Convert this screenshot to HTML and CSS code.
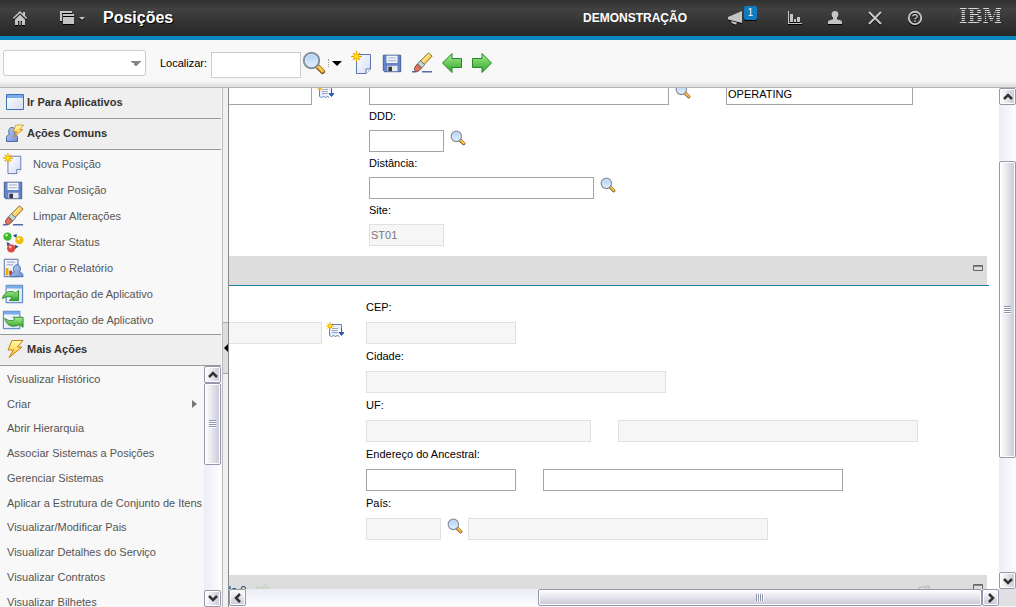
FILE: index.html
```html
<!DOCTYPE html>
<html lang="pt-BR">
<head>
    <meta charset="UTF-8">
    <meta name="viewport" content="width=device-width, initial-scale=1.0">
    <title>Posições</title>
    <link rel="stylesheet" href="styles.css">
</head>
<body>
    <!-- Icon set -->
    <svg class="icon-defs" aria-hidden="true">
        <defs>
            <linearGradient id="gGreen" x1="0" y1="0" x2="0" y2="1"><stop offset="0" stop-color="#a8ee8c"/><stop offset="1" stop-color="#2fa329"/></linearGradient>
            <linearGradient id="gPage" x1="0" y1="0" x2="1" y2="1"><stop offset="0" stop-color="#ffffff"/><stop offset="1" stop-color="#d3dcf3"/></linearGradient>
            <linearGradient id="gBolt" x1="0" y1="0" x2="0" y2="1"><stop offset="0" stop-color="#fffbb0"/><stop offset="1" stop-color="#ffc21c"/></linearGradient>
            <linearGradient id="gBlue" x1="0" y1="0" x2="1" y2="1"><stop offset="0" stop-color="#bccdf0"/><stop offset="1" stop-color="#6f8fd0"/></linearGradient>
            <linearGradient id="gLens" x1="0" y1="0" x2="0" y2="1"><stop offset="0" stop-color="#a9cdf3"/><stop offset="1" stop-color="#e6f3ff"/></linearGradient>
        </defs>
        <symbol id="home" viewBox="0 0 16 16"><path d="M8 1 0.8 8l1.1 1.1L8 3.2l6.1 5.9L15.2 8 13 5.8V2h-2v1.9z"/><path d="M8 4.6 3 9.4V15h3v-4h1.3v4h1.4v-4H10v4h3V9.4z"/></symbol>
        <symbol id="windows" viewBox="0 0 16 16"><path d="M1 1h12v2H3v8H1z"/><path d="M4 4h11v2H4zM4 7h11v7H4z"/></symbol>
        <symbol id="megaphone" viewBox="0 0 16 16"><path d="M15 1v12L1 9.5V7z"/><path d="M4 11l6 1.6-1 2.2-4-1.6z"/></symbol>
        <symbol id="chart" viewBox="0 0 16 16"><path d="M1 1h1v12h13v1H1zM3 4h3v8H3zM7 9h2v3H7zM10 7h3v5h-3z"/></symbol>
        <symbol id="user" viewBox="0 0 16 16"><path d="M8 1c2.4 0 3.4 1.500 3.400 3.400 0 1.600-.8 2.600-1.400 3.500v1.300l4 1.400c.9.3 1 1.200 1 3.400H1c0-2.200.1-3.100 1-3.400l4-1.400V7.900C5.400 7 4.600 6 4.600 4.400 4.600 2.500 5.600 1 8 1z"/></symbol>
        <symbol id="close" viewBox="0 0 16 16"><path d="M2 2l12 12M14 2 2 14" fill="none" stroke="currentColor" stroke-width="2.200"/></symbol>
        <symbol id="help" viewBox="0 0 16 16"><circle cx="8" cy="8" r="6.200" fill="none" stroke="currentColor" stroke-width="1.900"/><path d="M5.800 6.600C5.800 3.800 10.300 4 10.200 6.500 10.200 8 8 8 8 9.600" fill="none" stroke="currentColor" stroke-width="1.500"/><path d="M7.200 10.500h1.600V12H7.200z"/></symbol>
        <symbol id="search" viewBox="0 0 24 24"><path d="M15 15l5.500 5.500" stroke="#8b5a2b" stroke-width="5" stroke-linecap="round"/><path d="M16 15.500l4.500 4.500" stroke="#ffc83a" stroke-width="3" stroke-linecap="round"/><circle cx="9.500" cy="9.500" r="7.700" fill="url(#gLens)" stroke="#87909e" stroke-width="2"/><circle cx="9.500" cy="9.500" r="6" fill="none" stroke="#dfe8f4"/></symbol>
        <symbol id="star" viewBox="0 0 12 12"><path d="M6 0v12M0 6h12M2.200 2.200l7.600 7.600M9.800 2.200 2.200 9.800" stroke="#eba300" stroke-width="1.400"/><circle cx="6" cy="6" r="2.500" fill="#fff200" stroke="#f5b700"/></symbol>
        <symbol id="new" viewBox="0 0 24 24"><path d="M6.500 3.500h14V18L16 22.500H6.500z" fill="url(#gPage)" stroke="#5e76ad"/><path d="M20.500 18H16v4.500" fill="#fff" stroke="#5e76ad"/><use href="#star" x="1" y="0" width="11" height="11"/></symbol>
        <symbol id="save" viewBox="0 0 24 24"><path d="M2.500 3.500h19v18H4l-1.500-1.500z" fill="#6384c8" stroke="#3d588f"/><path d="M6 4h12v8H6z" fill="#f5f6fa"/><path d="M7.500 6.500h9M7.500 9.500h9" stroke="#9ca9bf"/><path d="M7 15h11v6H7z" fill="#e9e9e9"/><path d="M8 16h4v5H8z" fill="#353b49"/></symbol>
        <symbol id="eraser" viewBox="0 0 24 24"><path d="M1 21.500h5M12 21.500h11" stroke="#516ca9" stroke-width="1.500"/><path d="M10 10 19 1l4 3.500L14 14z" fill="#ffd45e" stroke="#776129"/><path d="M20 2.500 11 12" stroke="#fff5b5"/><path d="M7 13l3.500-3.500L15 14l-3.500 3.500z" fill="#c5d7d5" stroke="#526a6b"/><path d="M4 17l3-4 4.500 4.500L8 21c-3 1-5-1-4-4z" fill="#dd7460" stroke="#7b3931"/></symbol>
        <symbol id="arrow-left" viewBox="0 0 24 24"><path d="M2.500 12 12 2.500v5h9.500v9H12v5z" fill="url(#gGreen)" stroke="#24862a"/></symbol>
        <symbol id="arrow-right" viewBox="0 0 24 24"><path d="M21.500 12 12 2.500v5H2.500v9H12v5z" fill="url(#gGreen)" stroke="#24862a"/></symbol>
        <symbol id="app" viewBox="0 0 20 20"><path d="M1.500 2.500h17v15h-17z" fill="url(#gPage)" stroke="#3b71b7"/><path d="M2 3h16v3H2z" fill="#78abe9"/></symbol>
        <symbol id="bolt" viewBox="0 0 20 20"><path d="M7 1.500h11L12.500 8H17L4 18.500 8.500 11H3z" fill="url(#gBolt)" stroke="#c57c16"/></symbol>
        <symbol id="person-bolt" viewBox="0 0 20 20"><path d="M1.500 18.500v-4c0-2 1.500-2.500 3-3-2-4 0-7 2.500-7s4.500 3 2.500 7c1.500.5 3 1 3 3v4z" fill="url(#gBlue)" stroke="#4d69a8"/><use href="#bolt" x="6" y="1" width="14" height="14"/></symbol>
        <symbol id="status" viewBox="0 0 24 24"><path d="M12 5l4-2v5zM5 12l1 5 3-3zM18 17l-4 3v-5z" fill="#284f85"/><circle cx="6" cy="6" r="4.500" fill="#39b82f"/><circle cx="5" cy="4.500" r="1.500" fill="#bbf19e"/><circle cx="19" cy="10" r="4.500" fill="#efbc16"/><circle cx="18" cy="8.500" r="1.500" fill="#fff5aa"/><circle cx="10" cy="19" r="4.500" fill="#d94b43"/><circle cx="9" cy="17.500" r="1.500" fill="#ffc0b5"/></symbol>
        <symbol id="report" viewBox="0 0 24 24"><path d="M2.500 2.500h15v19h-15z" fill="url(#gPage)" stroke="#4a679e"/><path d="M5 5.500h9M5 8.500h7" stroke="#8f9db4"/><path d="M4 12h3v8H4z" fill="#e8ad00"/><path d="M8 15h3v5H8z" fill="#d02a22"/><path d="M9.500 21.500c0-4 2-4.500 4-5-2.500-4 0-8 3-8s5 4 2.500 8c2 .5 4 1 4 5z" fill="url(#gBlue)" stroke="#3a6cae"/></symbol>
        <symbol id="import" viewBox="0 0 24 24"><path d="M4.500 2.500h18v19h-18z" fill="url(#gPage)" stroke="#3b71b7"/><path d="M5 3h17v3H5z" fill="#78abe9"/><path d="M.5 17C2 10 9 7 15 11l3-3v11H8l3-3c-3-2-7-1-10.500 1z" fill="url(#gGreen)" stroke="#2b8a2d"/></symbol>
        <symbol id="export" viewBox="0 0 24 24"><path d="M1.500 2.500h18v19h-18z" fill="url(#gPage)" stroke="#3b71b7"/><path d="M2 3h17v3H2z" fill="#78abe9"/><path d="M3 10c3 3 8 4 11 1l-2-2h11v11l-4-3C12 21 4 18 3 10z" fill="url(#gGreen)" stroke="#2b8a2d"/></symbol>
        <symbol id="doc-menu" viewBox="0 0 18 16"><path d="M3.500 2.500h12V9M3.500 2.500v11l2 1 2-1 2 1 2-1 2 1" fill="#e9eefb" stroke="#6c83b6"/><path d="M6 6.500h6M6 8.500h6M6 10.500h6" stroke="#91a3cf"/><path d="M15.500 6v7M13 10.500h5l-2.500 3z" fill="#2b5bb5" stroke="#2b5bb5"/><use href="#star" width="8" height="8"/></symbol>
        <symbol id="minimize" viewBox="0 0 10 6"><path d="M.5.5h9v5h-9z" fill="#ddd" stroke="#666"/><path d="M1 1h8v1H1z" fill="#888"/></symbol>
        <symbol id="chev" viewBox="0 0 10 10"><path d="M1 7l4-4 4 4" fill="none" stroke="#333" stroke-width="2.500"/></symbol>
    </svg>

    <header class="navbar">
        <button class="nav-btn" aria-label="Início"><svg class="i16"><use href="#home"/></svg></button>
        <button class="nav-btn nav-windows" aria-label="Aplicativos abertos"><svg class="i16"><use href="#windows"/></svg><span class="caret"></span></button>
        <h1>Posições</h1>
        <span class="user-name">DEMONSTRAÇÃO</span>
        <button class="nav-btn nav-news" aria-label="Boletins"><svg class="i16"><use href="#megaphone"/></svg><span class="badge">1</span></button>
        <button class="nav-btn" aria-label="Relatórios"><svg class="i16"><use href="#chart"/></svg></button>
        <button class="nav-btn" aria-label="Perfil"><svg class="i16"><use href="#user"/></svg></button>
        <button class="nav-btn" aria-label="Sair"><svg class="i16"><use href="#close"/></svg></button>
        <button class="nav-btn" aria-label="Ajuda"><svg class="i16"><use href="#help"/></svg></button>
        <span class="logo">IBM<small>.</small></span>
    </header>

    <div class="toolbar">
        <select class="query" aria-label="Consulta"><option></option></select>
        <label for="find">Localizar:</label>
        <input type="text" id="find" class="find">
        <button class="tool tool-search" aria-label="Pesquisar"><svg class="i24"><use href="#search"/></svg></button>
        <button class="tool find-menu" aria-label="Opções de pesquisa"><span class="dots"></span><span class="caret"></span></button>
        <div class="tools">
            <button class="tool" aria-label="Nova"><svg class="i24"><use href="#new"/></svg></button>
            <button class="tool" aria-label="Salvar"><svg class="i22"><use href="#save"/></svg></button>
            <button class="tool" aria-label="Limpar"><svg class="i22"><use href="#eraser"/></svg></button>
            <button class="tool" aria-label="Anterior"><svg class="i24"><use href="#arrow-left"/></svg></button>
            <button class="tool" aria-label="Próximo"><svg class="i24"><use href="#arrow-right"/></svg></button>
        </div>
    </div>

    <div class="workspace">
        <nav class="sidebar">
            <h2><svg class="i20"><use href="#app"/></svg>Ir Para Aplicativos</h2>
            <h2><svg class="i20"><use href="#person-bolt"/></svg>Ações Comuns</h2>
            <ul class="common">
                <li><a href="#"><svg class="i22"><use href="#new"/></svg>Nova Posição</a></li>
                <li><a href="#"><svg class="i22"><use href="#save"/></svg>Salvar Posição</a></li>
                <li><a href="#"><svg class="i22"><use href="#eraser"/></svg>Limpar Alterações</a></li>
                <li><a href="#"><svg class="i22"><use href="#status"/></svg>Alterar Status</a></li>
                <li><a href="#"><svg class="i22"><use href="#report"/></svg>Criar o Relatório</a></li>
                <li><a href="#"><svg class="i22"><use href="#import"/></svg>Importação de Aplicativo</a></li>
                <li><a href="#"><svg class="i22"><use href="#export"/></svg>Exportação de Aplicativo</a></li>
            </ul>
            <h2><svg class="i20"><use href="#bolt"/></svg>Mais Ações</h2>
            <div class="more-wrap">
                <ul class="more">
                    <li><a href="#">Visualizar Histórico</a></li>
                    <li><a href="#" class="has-sub">Criar</a></li>
                    <li><a href="#">Abrir Hierarquia</a></li>
                    <li><a href="#">Associar Sistemas a Posições</a></li>
                    <li><a href="#">Gerenciar Sistemas</a></li>
                    <li><a href="#">Aplicar a Estrutura de Conjunto de Itens</a></li>
                    <li><a href="#">Visualizar/Modificar Pais</a></li>
                    <li><a href="#">Visualizar Detalhes do Serviço</a></li>
                    <li><a href="#">Visualizar Contratos</a></li>
                    <li><a href="#">Visualizar Bilhetes</a></li>
                </ul>
                <div class="scroll scroll-side">
                    <button aria-label="Rolar para cima"><svg class="i10"><use href="#chev"/></svg></button>
                    <span class="thumb"></span>
                    <button class="down" aria-label="Rolar para baixo"><svg class="i10"><use href="#chev"/></svg></button>
                </div>
            </div>
        </nav>
        <div class="splitter"><button aria-label="Recolher menu"></button></div>

        <main class="pane">
            <div class="view">
                <div class="form form-top">
                    <div class="col-left">
                        <input type="text" aria-label="Descrição curta">
                        <button class="ico" aria-label="Menu"><svg class="i-menu"><use href="#doc-menu"/></svg></button>
                    </div>
                    <div class="col-main">
                        <div class="row">
                            <input type="text" class="w300" aria-label="Código">
                            <button class="ico" aria-label="Procurar"><svg class="i16"><use href="#search"/></svg></button>
                            <input type="text" class="w-status" value="OPERATING" aria-label="Status">
                        </div>
                        <label for="ddd">DDD:</label>
                        <div class="row">
                            <input type="text" id="ddd" class="w75">
                            <button class="ico" aria-label="Procurar DDD"><svg class="i16"><use href="#search"/></svg></button>
                        </div>
                        <label for="dist">Distância:</label>
                        <div class="row">
                            <input type="text" id="dist" class="w225">
                            <button class="ico" aria-label="Procurar distância"><svg class="i16"><use href="#search"/></svg></button>
                        </div>
                        <label for="site">Site:</label>
                        <div class="row"><input type="text" id="site" class="w75" value="ST01" readonly></div>
                    </div>
                </div>

                <div class="bar"><div class="bar-fill">
                    <button class="min" aria-label="Minimizar"><svg><use href="#minimize"/></svg></button>
                </div></div>

                <div class="form form-address">
                    <div class="col-left">
                        <input type="text" aria-label="Endereço" readonly>
                        <button class="ico" aria-label="Menu do endereço"><svg class="i-menu"><use href="#doc-menu"/></svg></button>
                    </div>
                    <div class="col-main">
                        <label for="cep">CEP:</label>
                        <div class="row"><input type="text" id="cep" class="w150" readonly></div>
                        <label for="cidade">Cidade:</label>
                        <div class="row"><input type="text" id="cidade" class="w300" readonly></div>
                        <label for="uf">UF:</label>
                        <div class="row pair">
                            <input type="text" id="uf" class="w225" readonly>
                            <input type="text" class="w300" aria-label="Nome da UF" readonly>
                        </div>
                        <label for="anc">Endereço do Ancestral:</label>
                        <div class="row pair">
                            <input type="text" id="anc" class="w150">
                            <input type="text" class="w300" aria-label="Descrição do ancestral">
                        </div>
                        <label for="pais">País:</label>
                        <div class="row">
                            <input type="text" id="pais" class="w75" readonly>
                            <button class="ico" aria-label="Procurar país"><svg class="i16"><use href="#search"/></svg></button>
                            <input type="text" class="w300" aria-label="Nome do país" readonly>
                        </div>
                    </div>
                </div>

                <div class="bar"><div class="bar-fill">
                    <span class="count">de 0</span>
                    <svg class="i20 faded"><use href="#arrow-right"/></svg>
                    <svg class="download" viewBox="0 0 12 12"><path d="M1 11V3h6M8 2h3v9H8z" fill="none" stroke="#b5b5b5"/></svg>
                    <button class="min" aria-label="Minimizar"><svg><use href="#minimize"/></svg></button>
                </div></div>
            </div>
            <div class="scroll scroll-main">
                <button aria-label="Rolar para cima"><svg class="i10"><use href="#chev"/></svg></button>
                <span class="thumb"></span>
                <button class="down" aria-label="Rolar para baixo"><svg class="i10"><use href="#chev"/></svg></button>
            </div>
            <div class="scroll scroll-h">
                <button class="left" aria-label="Rolar para a esquerda"><svg class="i10"><use href="#chev"/></svg></button>
                <span class="thumb"></span>
                <button class="right" aria-label="Rolar para a direita"><svg class="i10"><use href="#chev"/></svg></button>
            </div>
            <div class="corner"></div>
        </main>
    </div>
</body>
</html>
```
FILE: styles.css
```css
* { box-sizing: border-box; }
body {
    margin: 0;
    height: 100vh;
    display: flex;
    flex-direction: column;
    overflow: hidden;
    background: #f8f8f8;
    font-family: "Liberation Sans", Arial, sans-serif;
    font-size: 11px;
    color: #000;
}
button {
    padding: 0;
    border: 0;
    background: none;
    color: inherit;
    font: inherit;
    cursor: pointer;
}
svg { display: block; flex: none; }
.icon-defs { position: absolute; width: 0; height: 0; }
.i10 { width: 10px; height: 10px; }
.i16 { width: 16px; height: 16px; }
.i20 { width: 20px; height: 20px; }
.i22 { width: 22px; height: 22px; }
.i24 { width: 24px; height: 24px; }
.i-menu { width: 18px; height: 16px; }
.caret {
    border: 5px solid transparent;
    border-top-color: currentColor;
    border-bottom: 0;
}

/* Top bar */
.navbar {
    flex: none;
    display: flex;
    align-items: center;
    height: 40px;
    padding-right: 15px;
    background: linear-gradient(#303030, #414141 25%, #262626);
    border-bottom: 4px solid #0c87be;
    color: #fff;
}
.nav-btn {
    display: flex;
    align-items: center;
    justify-content: center;
    width: 40px;
    height: 36px;
    color: #c4c4c4;
    fill: currentColor;
    filter: drop-shadow(0 1px 0 #000);
}
.nav-windows { width: 46px; margin-left: 9px; gap: 4px; }
.nav-windows .caret { border-width: 3px; border-bottom: 0; }
.navbar h1 {
    margin: 0 auto 0 8px;
    font-size: 16px;
    line-height: 36px;
    text-shadow: 1px 1px 1px #000;
}
.user-name { margin-right: 40px; font-size: 12px; font-weight: bold; }
.nav-news { gap: 1px; justify-content: flex-start; width: 48px; }
.badge {
    align-self: flex-start;
    width: 13px;
    margin-top: 6px;
    border-radius: 2px;
    background: #117bc0;
    color: #fff;
    font-size: 10px;
    line-height: 14px;
}
.logo {
    display: flex;
    align-items: baseline;
    width: 42px;
    margin-left: 24px;
    font: bold 20px/24px "DejaVu Serif Condensed", "DejaVu Serif", serif;
    color: transparent;
    background: repeating-linear-gradient(#d8d8d8 0 1px, transparent 1px 2px);
    -webkit-background-clip: text;
    background-clip: text;
}
.logo small { font-size: 10px; }

/* Toolbar */
.toolbar {
    flex: none;
    display: flex;
    align-items: center;
    height: 48px;
    padding: 0 3px 1px;
    border-bottom: 1px solid #b4b4b4;
    background: linear-gradient(#f8f8f8 42px, #ececec 42px 44px, #e0e0e0 45px);
}
.query {
    appearance: none;
    width: 143px;
    height: 26px;
    border: 1px solid #ccc;
    border-radius: 3px;
    background: linear-gradient(to bottom left, #888 50%, transparent 50%) 127px 10px / 5px 5px no-repeat,
        linear-gradient(to bottom right, #888 50%, transparent 50%) 132px 10px / 5px 5px no-repeat, #fff;
}
.toolbar label { margin-left: 14px; }
.find {
    width: 90px;
    height: 26px;
    margin: 3px 1px 0 4px;
    border: 1px solid #ccc;
}
.tool { display: flex; align-items: center; justify-content: center; }
.find-menu { gap: 3px; width: 18px; }
.dots { width: 1px; height: 8px; border-left: 1px dotted #999; }
.tools { display: flex; align-items: center; margin-left: 3px; }
.tools .tool { width: 30px; }

/* Sidebar */
.workspace { flex: 1; min-height: 0; display: flex; }
.sidebar {
    flex: none;
    width: 223px;
    display: flex;
    flex-direction: column;
    padding-right: 1px;
    border-right: 1px solid #bbb;
}
.sidebar h2 {
    flex: none;
    display: flex;
    align-items: center;
    gap: 2px;
    height: 31px;
    margin: 0;
    padding: 0 0 2px 5px;
    border-bottom: 1px solid #999;
    background: #efefef;
    font-size: 11px;
    color: #333;
}
.sidebar ul { list-style: none; margin: 0; padding: 0; }
.sidebar a { display: flex; align-items: center; color: #555; text-decoration: none; }
.sidebar .common { flex: none; padding: 1px 0; border-bottom: 1px solid #999; }
.common a { gap: 9px; height: 26px; padding-left: 2px; }
.more-wrap { flex: 1; min-height: 0; display: flex; }
.more { flex: 1; overflow: hidden; white-space: nowrap; }
.more a { height: 25px; padding: 0 7px; }
.more li:nth-child(4n+3) a { height: 24px; }
.has-sub::after {
    content: "";
    margin-left: auto;
    border: 4px solid transparent;
    border-left: 5px solid #777;
    border-right: 0;
}
.splitter {
    flex: none;
    display: flex;
    align-items: center;
    width: 6px;
    border-right: 1px solid #888;
    background: #f0f0f0;
}
.splitter button {
    width: 5px;
    height: 52px;
    border: solid #aaa;
    border-width: 1px 0;
    background: #ddd;
}
.splitter button::before {
    content: "";
    display: block;
    border: 4px solid transparent;
    border-right-color: #000;
    border-left: 0;
}

/* Record view */
.pane {
    flex: 1;
    min-width: 0;
    display: grid;
    grid-template-columns: minmax(0, 1fr) 17px;
    grid-template-rows: minmax(0, 1fr) 17px;
    padding-bottom: 1px;
}
.view { overflow: hidden; background: #fff; }
.form { display: flex; margin-left: -70px; }
.form input {
    flex: none;
    display: block;
    height: 22px;
    padding: 0 1px;
    border: 1px solid #a5a5a5;
    background: #fff;
    font: inherit;
    color: #000;
}
.form input:read-only { border-color: #e0e0e0; background: #f6f6f6; color: #777; }
.form label { display: block; width: max-content; line-height: 23px; padding-bottom: 2px; }
.form-top { margin-top: -5px; padding-bottom: 10px; }
.col-left { flex: none; display: flex; align-items: flex-start; gap: 4px; }
.form-top .col-left { width: 210px; }
.form-top .col-left input { width: 153px; }
.row { display: flex; align-items: flex-start; gap: 6px; }
.row .ico { width: 15px; }
.pair { gap: 27px; }
.w75 { width: 75px; }
.w150 { width: 150px; }
.w225 { width: 225px; }
.w300 { width: 300px; }
.w-status { width: 187px; margin-left: 30px; }
.form-address { padding: 9px 0 35px; }
.form-address label { line-height: 25px; }
.form-address .col-left { width: 207px; padding-top: 27px; }
.form-address .col-left input { width: 163px; }

.bar { margin-right: 10px; padding-right: 2px; border-bottom: 1px solid #1b7f9f; }
.bar-fill {
    display: flex;
    align-items: flex-start;
    height: 29px;
    padding: 9px 4px 0 0;
    background: #ddd;
}
.min { margin-left: auto; }
.min svg { width: 10px; height: 6px; }
.count { margin-left: -4px; color: #003a75; }
.faded { margin: -3px 0 0 8px; opacity: 0.15; }
.download { width: 12px; height: 12px; margin-left: auto; }
.download + .min { margin-left: 43px; }

/* Scrollbars */
.scroll { display: grid; background: linear-gradient(to right, #ebedf5, #fdfdff); }
.scroll button, .thumb {
    display: flex;
    align-items: center;
    justify-content: center;
    border: 1px solid #9796aa;
    border-radius: 2px;
    background: linear-gradient(to right, #fff, #c8c8d8);
    box-shadow: inset 0 0 0 1px #fff;
}
.thumb::after {
    content: "";
    width: 7px;
    height: 8px;
    background: repeating-linear-gradient(#8d93a8 0 1px, #fff 1px 2px);
}
.scroll-side { width: 17px; grid-template-rows: 17px 82fr 124fr 17px; }
.scroll-main { grid-template-rows: 17px 56fr 298fr 114fr 17px; }
.scroll-main .thumb { grid-row: 3; }
.scroll .down { grid-row: -2; }
.scroll-h {
    grid-template-columns: 17px 292fr 443fr 17px;
    background: linear-gradient(#ebedf5, #fdfdff);
}
.scroll-h button, .scroll-h .thumb { grid-row: 1; background: linear-gradient(#fff, #c8c8d8); }
.scroll-h .thumb { grid-column: 3; }
.scroll-h .right { grid-column: 4; }
.scroll-h .thumb::after { width: 8px; height: 7px; background: repeating-linear-gradient(to right, #8d93a8 0 1px, #fff 1px 2px); }
.down svg { transform: rotate(180deg); }
.left svg { transform: rotate(-90deg); }
.right svg { transform: rotate(90deg); }
.corner { background: #e0dfe3; }
```
